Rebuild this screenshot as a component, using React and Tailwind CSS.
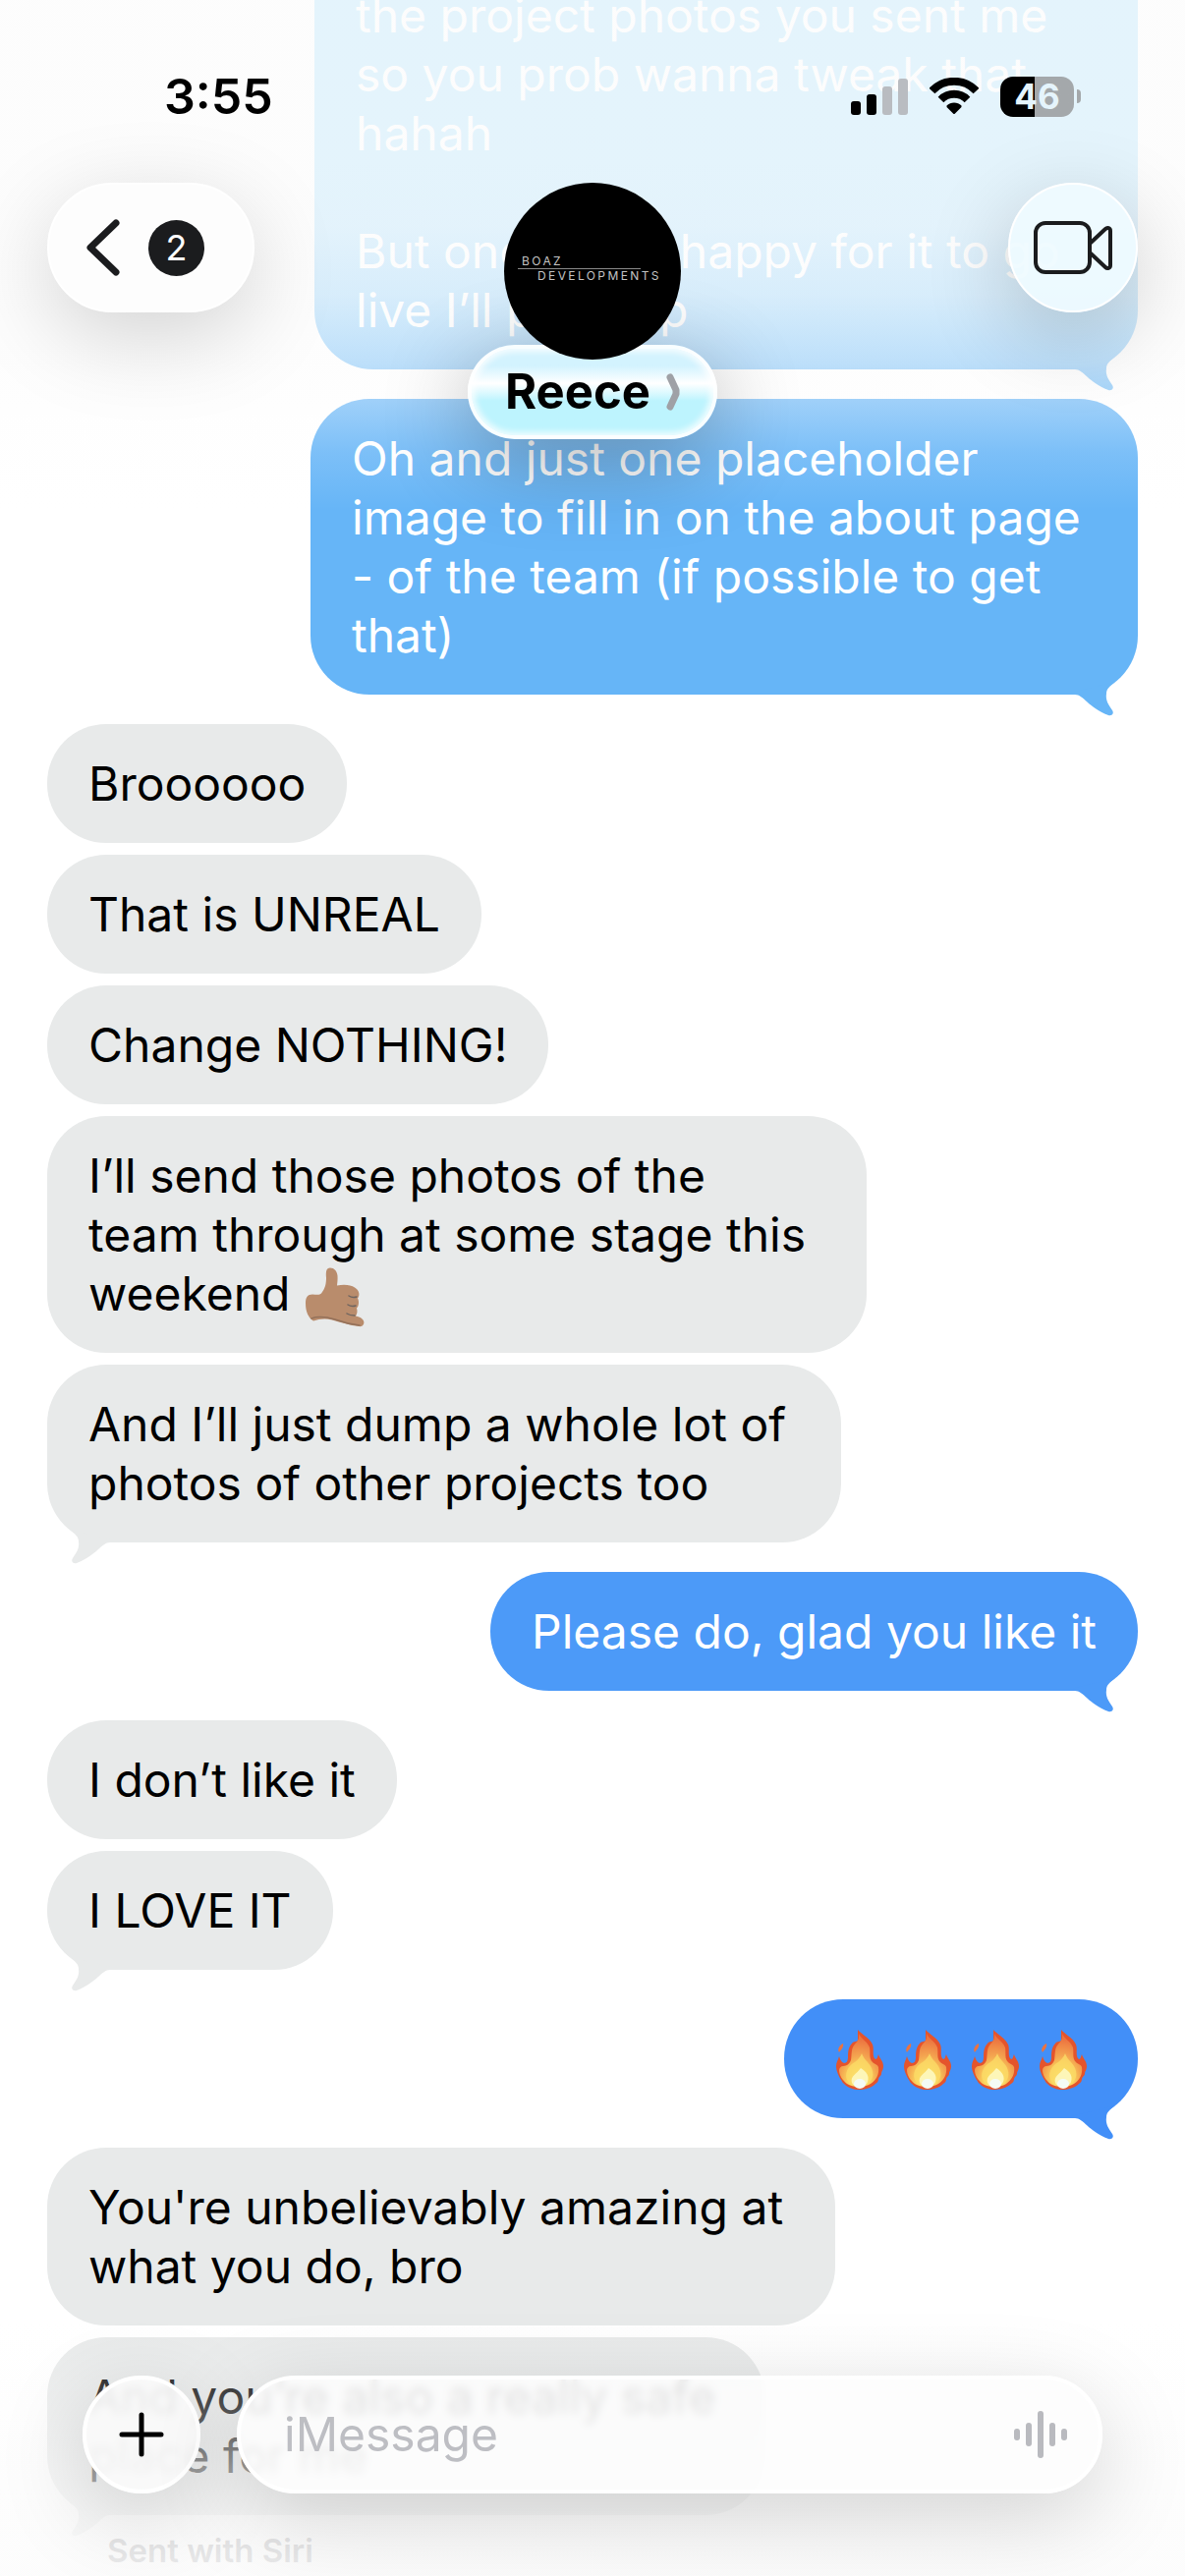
import React, { useState } from "react";

const messages = [
  {
    from: "me",
    text: "the project photos you sent me\nso you prob wanna tweak that\nhahah\n\nBut once your happy for it to go\nlive I’ll put it up",
    color: "bg-linear-to-b from-[#77cffc] from-50% to-[#6ab9f7] text-[#6ab9f7]",
    size: "min-w-[838px]",
    tail: true,
    cut: true,
  },
  {
    from: "me",
    text: "Oh and just one placeholder\nimage to fill in on the about page\n- of the team (if possible to get\nthat)",
    color: "bg-[#66b5f7] text-[#66b5f7]",
    size: "min-w-[842px]",
    tail: true,
  },
  { from: "them", text: "Broooooo" },
  { from: "them", text: "That is UNREAL" },
  { from: "them", text: "Change NOTHING!" },
  {
    from: "them",
    text: "I’ll send those photos of the\nteam through at some stage this\nweekend ",
    emoji: "shaka",
    size: "min-w-[834px]",
  },
  {
    from: "them",
    text: "And I’ll just dump a whole lot of\nphotos of other projects too",
    size: "min-w-[808px]",
    tail: true,
  },
  {
    from: "me",
    text: "Please do, glad you like it",
    color: "bg-[#4c9af8] text-[#4c9af8]",
    tail: true,
  },
  { from: "them", text: "I don’t like it" },
  { from: "them", text: "I LOVE IT", tail: true },
  {
    from: "me",
    emoji: "fire",
    count: 4,
    color: "bg-[#428ff8] text-[#428ff8]",
    tail: true,
  },
  {
    from: "them",
    text: "You're unbelievably amazing at\nwhat you do, bro",
    size: "min-w-[802px]",
  },
  {
    from: "them",
    text: "And you’re also a really safe\nplace for me",
    size: "min-w-[730px]",
    tail: true,
  },
];

const Fire = () => (
  <svg
    viewBox="0 14 69 62"
    className="inline-block h-[62px] w-[69px]"
    role="img"
    aria-label="fire"
  >
    <defs>
      <radialGradient id="flame" cx="0.5" cy="0.9" r="0.8">
        <stop offset="0" stopColor="#fdf6b8" />
        <stop offset="0.3" stopColor="#fbd95e" />
        <stop offset="0.6" stopColor="#f4a650" />
        <stop offset="1" stopColor="#ec7340" />
      </radialGradient>
    </defs>
    <path
      d="M33 15c3 4 12 8 15 15 2 5-1 12 3 15 2 0 2-3 3-5 1 4 5 7 5 12 0 4-2 5-2 8 0 2-3 3-3 5s-1 4-3 5c-4 4-11 6-17 6-5 0-11-2-15-6-2-1-2-3-3-4-2-3-5-9-5-14 0-4 2-6 3-10 1 3 2 6 5 7 3 0 4-3 4-6 0-7 1-11 4-14 2-3 6-1 6-4z"
      fill="#e4542c"
    />
    <path d="M18 29c1 4-2 6-4 9-2-3 0-7 4-9z" fill="#ec7340" />
    <path
      d="M34 19c2 5 9 8 11 14 1 6-1 11 3 15 2 2 5 2 6 5 1 7-2 13-8 17-6 4-18 4-24 0-5-4-8-9-8-14 0-2 2-4 4-4 4 0 7-3 8-6 1-5 0-11 3-15 2-3 6-5 5-12z"
      fill="url(#flame)"
    />
    <path
      d="M37 39c2 6 6 8 9 13 4 7 3 14-3 18-5 4-13 4-18 0-5-5-5-11-1-17 4-5 10-6 13-14z"
      fill="#fbdb66"
      opacity="0.8"
    />
    <path
      d="M36 54c6 4 9 8 7 14-2 6-14 7-16 1-2-7 5-9 9-15z"
      fill="#fdf6b8"
    />
    <ellipse cx="35" cy="70" rx="6" ry="5" fill="#f4fbf5" />
  </svg>
);

const Shaka = () => (
  <svg
    viewBox="10 16 64 61"
    className="h-[61px] w-[64px]"
    role="img"
    aria-label="call me hand"
  >
    <path
      d="M37 16.5c4 0 7 3 7.5 8 .3 4-.2 7-.5 10 8-1.5 14-.5 18 2 5 3 5.5 8 3 11 1.5 2 1.5 8-1 10 1 3 .5 6-1 8 4 1 6 2 7 3.5 3 3 1 8-4 7-9-1-18-4-27-6.5-7-2-13-1-19 1-5-3-8-9-8-18 0-6 2-9 7-9 4 0 7 1 9-1 4-5 5-10 5-16-.5-6 0-10 4-10z"
      fill="#b98c6c"
    />
    <path
      d="M56 45c3 2 5 2 8 1M55 54c3 2 5 2 8 1M54 63c3 2 5 2 8 2"
      fill="none"
      stroke="#6f6560"
      strokeWidth="1.5"
      strokeLinecap="round"
    />
    <path
      d="M18 68c8-3 17-1 24 1 8 3 16 5 25 6"
      fill="none"
      stroke="#94715a"
      strokeWidth="1.5"
      strokeLinecap="round"
    />
  </svg>
);

const Tail = ({ mine }) => (
  <svg
    viewBox="0 0 70 50"
    fill="currentColor"
    aria-hidden="true"
    className={`absolute -bottom-[22px] h-[50px] w-[70px] ${
      mine ? "right-0" : "left-0 -scale-x-100"
    }`}
  >
    <path d="M2 26V28h4c9 0 13 13 34 21 4 1 6-2 4-5-4-6-7-10-6-17 0-5 4-8 9-12z" />
  </svg>
);

const Bubble = ({ message, first, grouped }) => {
  const mine = message.from === "me";
  const color = mine ? message.color : "bg-[#e8eaea] text-[#e8eaea]";
  const spacing = first ? "" : grouped ? "mt-3" : "mt-[30px]";

  return (
    <li
      className={`relative max-w-[842px] shrink-0 px-[42px] pt-[31px] pb-[30px] ${color} ${spacing} ${
        mine ? "self-end" : "self-start"
      } ${message.cut ? "rounded-b-[60px]" : "rounded-[60px]"} ${
        message.size || ""
      }`}
    >
      <p
        className={`whitespace-pre-line ${mine ? "text-white" : "text-black"}`}
      >
        {message.text}
        {message.emoji === "shaka" && (
          <span className="inline-flex h-[40px] items-center align-middle">
            <Shaka />
          </span>
        )}
        {message.emoji === "fire" && (
          <span className="flex h-[60px] items-center">
            {Array.from({ length: message.count }).map((_, i) => (
              <Fire key={i} />
            ))}
          </span>
        )}
      </p>
      {message.tail && <Tail mine={mine} />}
    </li>
  );
};

const StatusBar = () => (
  <div className="flex h-[186px] items-center justify-between pt-[10px] pr-[106px] pl-[167px]">
    <span className="text-[50px] font-semibold">3:55</span>
    <div className="flex items-center gap-[22px]">
      <svg viewBox="0 0 58 38" className="h-[38px] w-[58px]" aria-hidden="true">
        <rect x="0" y="24" width="10" height="14" rx="3" />
        <rect x="16" y="17" width="10" height="21" rx="3" />
        <rect x="32" y="9" width="10" height="29" rx="3" fill="#b9bcc1" />
        <rect x="48" y="1" width="10" height="37" rx="3" fill="#b9bcc1" />
      </svg>
      <svg viewBox="0 0 50 38" className="h-[38px] w-[50px]" aria-hidden="true">
        <g fill="none" stroke="black" strokeWidth="8">
          <path d="M2.5 13.5A31 31 0 0 1 47.5 13.5" />
          <path d="M11.5 22.5A19 19 0 0 1 38.5 22.5" />
        </g>
        <path d="M17.5 28.5c4-4 11-4 15 0v1.5l-7 7h-1l-7-7z" />
      </svg>
      <div className="flex items-center gap-[3px]">
        <div className="flex h-[41px] w-[75px] items-center justify-center rounded-[13px] bg-linear-to-r from-black from-47% to-[#a4a8ab] to-47% text-[35px] leading-none font-bold text-[#e5f4fc]">
          46
        </div>
        <div className="h-[14px] w-[4px] rounded-r-full bg-[#a4a8ab]" />
      </div>
    </div>
  </div>
);

const Header = () => (
  <header className="absolute inset-x-0 top-0">
    <StatusBar />
    <div className="grid grid-cols-[1fr_auto_1fr] items-start px-12">
      <button
        type="button"
        aria-label="Back, 2 unread"
        className="flex h-[132px] w-[211px] items-center justify-self-start rounded-full border-2 border-white bg-[#fdfdfd] pl-[38px] shadow-[0_24px_90px_rgba(0,0,0,0.17)]"
      >
        <svg
          viewBox="0 0 34 58"
          fill="none"
          stroke="#1b1c1e"
          strokeWidth="7"
          strokeLinecap="round"
          strokeLinejoin="round"
          className="h-[58px] w-[34px]"
        >
          <path d="M30 4L4 29l26 25" />
        </svg>
        <span className="ml-[29px] flex size-[57px] items-center justify-center rounded-full bg-[#1b1c1e] text-[36px] leading-none text-white">
          2
        </span>
      </button>

      <div className="flex flex-col items-center">
        <div className="relative z-10 flex size-[180px] flex-col justify-center rounded-full bg-black pb-[5px] text-[12px] leading-[14px] tracking-[0.2em] text-[#c4c4c4]">
          <span className="pl-[18px]">BOAZ</span>
          <span className="ml-[14px] h-px w-[125px] bg-[#8a8a8a]" />
          <span className="pl-[34px]">DEVELOPMENTS</span>
        </div>
        <button
          type="button"
          className="-mt-[15px] flex h-[96px] items-center gap-[16px] rounded-full border-4 border-white/90 bg-linear-to-b from-[#d3f3fe] from-20% via-white via-40% to-[#bdf4fe] to-60% px-[34px] text-[49px] font-bold shadow-[0_20px_90px_rgba(0,0,0,0.3),inset_0_0_6px_3px_rgba(255,255,255,0.8)]"
        >
          Reece
          <svg
            viewBox="0 0 14 38"
            fill="none"
            stroke="#9fa1a6"
            strokeWidth="7"
            strokeLinecap="round"
            strokeLinejoin="round"
            className="h-[38px] w-[14px]"
          >
            <path d="M4 4l6 13v4L4 34" />
          </svg>
        </button>
      </div>

      <button
        type="button"
        aria-label="Video call"
        className="flex size-[132px] items-center justify-center justify-self-end rounded-full border-2 border-white bg-[#eefbff]/90 shadow-[0_24px_90px_rgba(0,0,0,0.2)]"
      >
        <svg
          viewBox="0 0 80 54"
          fill="none"
          stroke="#1b1c1e"
          strokeWidth="4"
          strokeLinejoin="round"
          className="h-[54px] w-[80px]"
        >
          <rect x="2" y="2" width="55" height="50" rx="10" />
          <path d="M57 23L73 8c2-2 5-1 5 2v35c0 3-3 4-5 2L57 32" />
        </svg>
      </button>
    </div>
  </header>
);

const Composer = () => {
  const [draft, setDraft] = useState("");

  return (
    <form
      onSubmit={(e) => e.preventDefault()}
      className="absolute inset-x-0 bottom-0 flex gap-[37px] p-[84px]"
    >
      <button
        type="button"
        aria-label="Add attachment"
        className="flex size-[120px] shrink-0 items-center justify-center rounded-full border-4 border-white bg-[#fafafa]/90 shadow-[0_24px_90px_rgba(0,0,0,0.17)] backdrop-blur-xs"
      >
        <svg
          viewBox="0 0 46 46"
          stroke="black"
          strokeWidth="5"
          strokeLinecap="round"
          className="size-[46px]"
        >
          <path d="M23 3v40M3 23h40" />
        </svg>
      </button>
      <div className="flex h-[120px] min-w-0 grow items-center rounded-full border-4 border-white bg-[#fdfdfd]/85 pr-[32px] pl-[44px] shadow-[0_24px_90px_rgba(0,0,0,0.17)] backdrop-blur-xs">
        <input
          type="text"
          aria-label="Message"
          placeholder="iMessage"
          value={draft}
          onChange={(e) => setDraft(e.target.value)}
          className="min-w-0 grow bg-transparent outline-none placeholder:text-[#bdbec3]"
        />
        <button type="button" aria-label="Record audio" className="shrink-0">
          <svg
            viewBox="0 0 54 48"
            fill="#b9babf"
            className="h-[48px] w-[54px]"
          >
            <rect x="0" y="18" width="6" height="12" rx="3" />
            <rect x="12" y="12" width="6" height="24" rx="3" />
            <rect x="24" y="0" width="6" height="48" rx="3" />
            <rect x="36" y="12" width="6" height="24" rx="3" />
            <rect x="48" y="18" width="6" height="12" rx="3" />
          </svg>
        </button>
      </div>
    </form>
  );
};

const App = () => {
  return (
    <div className="relative flex h-screen flex-col justify-end overflow-hidden bg-white font-['Inter',sans-serif] text-[48px] leading-[60px]">
      <main className="isolate px-12 pb-[6px]">
        <ul className="flex flex-col">
          {messages.map((message, i) => (
            <Bubble
              key={i}
              message={message}
              first={i === 0}
              grouped={
                i > 0 &&
                messages[i - 1].from === message.from &&
                !messages[i - 1].tail
              }
            />
          ))}
        </ul>
        <p className="mt-4 pl-[61px] text-[33px] leading-[40px] font-semibold text-[#8e8e93]">
          Sent with Siri
        </p>
      </main>

      {/* fade the thread out behind the floating bars */}
      <div className="pointer-events-none absolute inset-x-0 top-0 h-[520px] bg-[linear-gradient(to_bottom,rgba(252,252,252,0.82)_0px,rgba(252,252,252,0.82)_230px,rgba(252,252,252,0.74)_300px,rgba(252,252,252,0.57)_370px,rgba(252,252,252,0.37)_410px,rgba(252,252,252,0.15)_460px,rgba(252,252,252,0)_520px)]" />
      <div className="pointer-events-none absolute inset-x-0 bottom-0 h-[260px] bg-[linear-gradient(to_bottom,rgba(252,252,252,0)_0px,rgba(252,252,252,0.33)_90px,rgba(252,252,252,0.62)_150px,rgba(252,252,252,0.75)_200px,rgba(252,252,252,0.85)_260px)]" />

      <Header />
      <Composer />
    </div>
  );
};

export default App;
